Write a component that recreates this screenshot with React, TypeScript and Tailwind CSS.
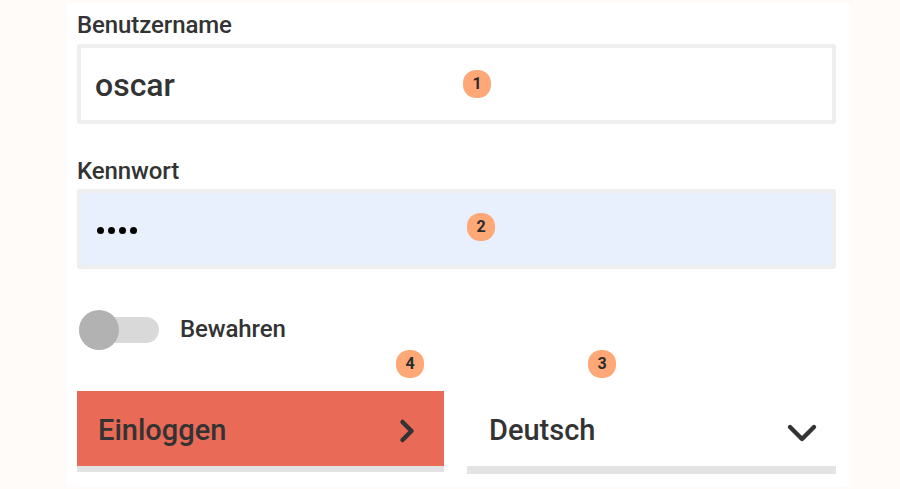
import { ChevronDown, ChevronRight } from "lucide-react"

function Badge({ n, className }: { n: number; className: string }) {
  return (
    <span
      className={`absolute flex h-[28px] w-[28px] items-center justify-center rounded-[13px] bg-[#ffa877] text-[16px] font-bold leading-none text-[#2b2b2b] ${className}`}
    >
      {n}
    </span>
  )
}

export default function App() {
  return (
    <div className="flex h-[489px] w-[900px] overflow-hidden bg-[#fffbf8] pl-[66px] pt-[3px] font-['Roboto',sans-serif] text-[#333333]">
      <div className="h-[484px] w-[785px] rounded-[3px] bg-white pl-[11px] pr-[15px]">
        <div className="h-[41px] pt-[8px] text-[24px] font-medium leading-[28px] tracking-[-0.1px]">Benutzername</div>

        <div className="relative flex h-[80px] items-center rounded-[3px] border-[4px] border-[#eeeeee] pl-[14px] pt-[2px] text-[32px] font-medium">
          oscar
          <Badge n={1} className="left-[382px] top-[22px]" />
        </div>

        <div className="mt-[32px] h-[33px] text-[24px] font-medium leading-[30px] tracking-[-0.1px]">Kennwort</div>

        <div className="relative flex h-[80px] items-center gap-[4px] rounded-[3px] border-[4px] border-[#eeeeee] bg-[#e8f0fe] pl-[16px] pt-[2px]">
          <i className="h-[7px] w-[7px] rounded-full bg-black" />
          <i className="h-[7px] w-[7px] rounded-full bg-black" />
          <i className="h-[7px] w-[7px] rounded-full bg-black" />
          <i className="h-[7px] w-[7px] rounded-full bg-black" />
          <Badge n={2} className="left-[386px] top-[20px]" />
        </div>

        <div className="mt-[41px] flex h-[40px] items-center">
          <div className="relative ml-[2px] flex h-[40px] w-[80px] items-center">
            <div className="h-[26px] w-full rounded-full bg-[#d9d9d9]" />
            <div className="absolute left-0 top-0 h-[40px] w-[40px] rounded-full bg-[#b2b2b2]" />
          </div>
          <span className="mb-[2px] ml-[21px] text-[24px] font-medium tracking-[-0.1px]">Bewahren</span>
        </div>

        <div className="relative mt-[41px] flex gap-[23px]">
          <Badge n={4} className="left-[319px] top-[-41px]" />
          <Badge n={3} className="left-[511px] top-[-41px]" />
          <div className="flex h-[81px] w-[367px] items-center justify-between border-b-[6px] border-[#e3e3e3] bg-[#e96a56] pl-[21px] pr-[19px] pt-[4px] text-[29px] font-medium">
            Einloggen
            <ChevronRight size={36} strokeWidth={3} />
          </div>
          <div className="flex h-[83px] w-[369px] items-center justify-between border-b-[8px] border-[#e3e3e3] pl-[22px] pr-[10px] pt-[4px] text-[29px] font-medium">
            Deutsch
            <ChevronDown size={48} strokeWidth={2.2} className="mt-[4px]" />
          </div>
        </div>
      </div>
    </div>
  )
}
